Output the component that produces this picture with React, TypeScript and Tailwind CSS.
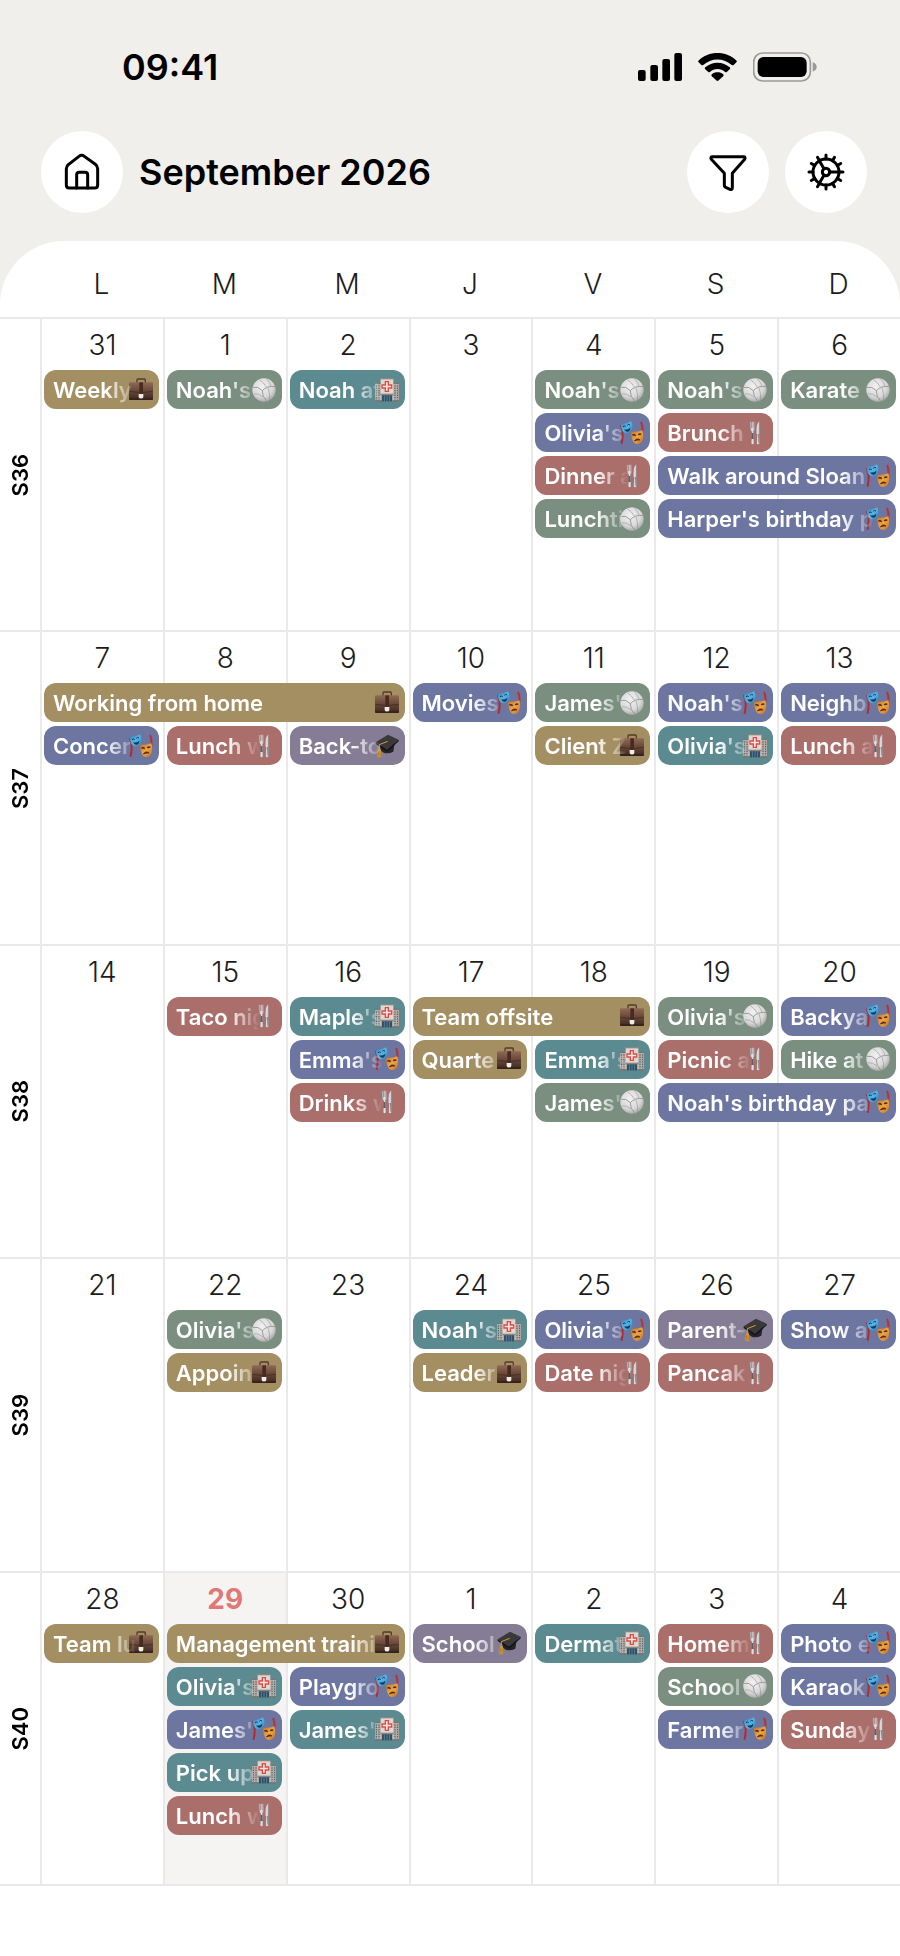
import type { ReactNode } from "react";

type Category = "work" | "sport" | "health" | "fun" | "food" | "school";

interface CalendarEvent {
  title: string;
  category: Category;
  day: number; // 0 = Monday
  lane: number;
  span?: number;
}

interface Week {
  label: string;
  days: number[];
  today?: number;
  events: CalendarEvent[];
}

const WEEKDAYS = ["L", "M", "M", "J", "V", "S", "D"];

const CATEGORY_BG: Record<Category, string> = {
  work: "bg-[#a48f63]",
  sport: "bg-[#7a8f80]",
  health: "bg-[#5c8a91]",
  fun: "bg-[#6d75a1]",
  food: "bg-[#aa6e6b]",
  school: "bg-[#857d95]",
};

const WEEKS: Week[] = [
  {
    label: "S36",
    days: [31, 1, 2, 3, 4, 5, 6],
    events: [
      { title: "Weekly", category: "work", day: 0, lane: 0 },
      { title: "Noah's", category: "sport", day: 1, lane: 0 },
      { title: "Noah at", category: "health", day: 2, lane: 0 },
      { title: "Noah's", category: "sport", day: 4, lane: 0 },
      { title: "Olivia's", category: "fun", day: 4, lane: 1 },
      { title: "Dinner a", category: "food", day: 4, lane: 2 },
      { title: "Lunchti", category: "sport", day: 4, lane: 3 },
      { title: "Noah's", category: "sport", day: 5, lane: 0 },
      { title: "Brunch", category: "food", day: 5, lane: 1 },
      { title: "Walk around Sloan", category: "fun", day: 5, lane: 2, span: 2 },
      { title: "Harper's birthday p", category: "fun", day: 5, lane: 3, span: 2 },
      { title: "Karate", category: "sport", day: 6, lane: 0 },
    ],
  },
  {
    label: "S37",
    days: [7, 8, 9, 10, 11, 12, 13],
    events: [
      { title: "Working from home", category: "work", day: 0, lane: 0, span: 3 },
      { title: "Concer", category: "fun", day: 0, lane: 1 },
      { title: "Lunch w", category: "food", day: 1, lane: 1 },
      { title: "Back-to", category: "school", day: 2, lane: 1 },
      { title: "Movies", category: "fun", day: 3, lane: 0 },
      { title: "James'", category: "sport", day: 4, lane: 0 },
      { title: "Client Z", category: "work", day: 4, lane: 1 },
      { title: "Noah's", category: "fun", day: 5, lane: 0 },
      { title: "Olivia's", category: "health", day: 5, lane: 1 },
      { title: "Neighb", category: "fun", day: 6, lane: 0 },
      { title: "Lunch a", category: "food", day: 6, lane: 1 },
    ],
  },
  {
    label: "S38",
    days: [14, 15, 16, 17, 18, 19, 20],
    events: [
      { title: "Taco nig", category: "food", day: 1, lane: 0 },
      { title: "Maple's", category: "health", day: 2, lane: 0 },
      { title: "Emma's", category: "fun", day: 2, lane: 1 },
      { title: "Drinks w", category: "food", day: 2, lane: 2 },
      { title: "Team offsite", category: "work", day: 3, lane: 0, span: 2 },
      { title: "Quarte", category: "work", day: 3, lane: 1 },
      { title: "Emma's", category: "health", day: 4, lane: 1 },
      { title: "James'", category: "sport", day: 4, lane: 2 },
      { title: "Olivia's", category: "sport", day: 5, lane: 0 },
      { title: "Picnic a", category: "food", day: 5, lane: 1 },
      { title: "Noah's birthday pa", category: "fun", day: 5, lane: 2, span: 2 },
      { title: "Backya", category: "fun", day: 6, lane: 0 },
      { title: "Hike at", category: "sport", day: 6, lane: 1 },
    ],
  },
  {
    label: "S39",
    days: [21, 22, 23, 24, 25, 26, 27],
    events: [
      { title: "Olivia's", category: "sport", day: 1, lane: 0 },
      { title: "Appoin", category: "work", day: 1, lane: 1 },
      { title: "Noah's", category: "health", day: 3, lane: 0 },
      { title: "Leader", category: "work", day: 3, lane: 1 },
      { title: "Olivia's", category: "fun", day: 4, lane: 0 },
      { title: "Date nig", category: "food", day: 4, lane: 1 },
      { title: "Parent-", category: "school", day: 5, lane: 0 },
      { title: "Pancak", category: "food", day: 5, lane: 1 },
      { title: "Show a", category: "fun", day: 6, lane: 0 },
    ],
  },
  {
    label: "S40",
    days: [28, 29, 30, 1, 2, 3, 4],
    today: 1,
    events: [
      { title: "Team lu", category: "work", day: 0, lane: 0 },
      { title: "Management traini", category: "work", day: 1, lane: 0, span: 2 },
      { title: "Olivia's", category: "health", day: 1, lane: 1 },
      { title: "James'", category: "fun", day: 1, lane: 2 },
      { title: "Pick up", category: "health", day: 1, lane: 3 },
      { title: "Lunch w", category: "food", day: 1, lane: 4 },
      { title: "Playgro", category: "fun", day: 2, lane: 1 },
      { title: "James'", category: "health", day: 2, lane: 2 },
      { title: "School", category: "school", day: 3, lane: 0 },
      { title: "Dermat", category: "health", day: 4, lane: 0 },
      { title: "Homem", category: "food", day: 5, lane: 0 },
      { title: "School", category: "sport", day: 5, lane: 1 },
      { title: "Farmer", category: "fun", day: 5, lane: 2 },
      { title: "Photo e", category: "fun", day: 6, lane: 0 },
      { title: "Karaok", category: "fun", day: 6, lane: 1 },
      { title: "Sunday", category: "food", day: 6, lane: 2 },
    ],
  },
];

// Shared gradients for the event icons
function IconDefs() {
  return (
    <svg className="absolute size-0" aria-hidden="true">
      <defs>
        <linearGradient id="leather" x1="0" y1="0" x2="0" y2="1">
          <stop offset="0" stopColor="#8f6a55" />
          <stop offset="0.45" stopColor="#6b4a3a" />
          <stop offset="1" stopColor="#3b2820" />
        </linearGradient>
        <radialGradient id="ball" cx="0.42" cy="0.35" r="0.65">
          <stop offset="0" stopColor="#f1f1f1" />
          <stop offset="0.7" stopColor="#d8d8d8" />
          <stop offset="1" stopColor="#adadad" />
        </radialGradient>
        <linearGradient id="maskBlue" x1="0" y1="0" x2="1" y2="1">
          <stop offset="0" stopColor="#2f7fb8" />
          <stop offset="0.5" stopColor="#55b4e6" />
          <stop offset="1" stopColor="#2b82bd" />
        </linearGradient>
        <linearGradient id="maskOrange" x1="0" y1="0" x2="1" y2="1">
          <stop offset="0" stopColor="#b9702c" />
          <stop offset="0.5" stopColor="#efa544" />
          <stop offset="1" stopColor="#c06f25" />
        </linearGradient>
        <linearGradient id="steel" x1="0" y1="0" x2="1" y2="0">
          <stop offset="0" stopColor="#8d959b" />
          <stop offset="0.5" stopColor="#e3e8ea" />
          <stop offset="1" stopColor="#a5adb2" />
        </linearGradient>
      </defs>
    </svg>
  );
}

const ICONS: Record<Category, ReactNode> = {
  work: (
    <>
      <path d="M24 15V6q0-3 3-3h19q3 0 3 3v9" fill="none" stroke="#55392c" strokeWidth="4" />
      <rect x="0" y="13" width="72" height="53" rx="4" fill="url(#leather)" />
      <path d="M1 40q35 8 70 0" fill="none" stroke="#3a251d" strokeWidth="2" />
      <path d="M31 13h11v34H31z" fill="#482a20" />
      <path d="M29 48h14v9q-1 6-7 6t-7-6z" fill="#f0ece6" />
      <path d="M0 63h72" stroke="#2d1c16" strokeWidth="3" />
    </>
  ),
  sport: (
    <>
      <circle cx="36" cy="36" r="35" fill="url(#ball)" />
      <g fill="none" stroke="#8c8c8c" strokeWidth="2.4">
        <path d="M31 38Q18 24 3 28M31 38Q46 22 69 26M31 38Q30 56 44 69" />
        <path d="M22 5Q36 14 43 27M44 3Q53 12 57 24" strokeWidth="1.6" />
        <path d="M6 47Q20 46 33 57M48 30Q54 44 53 66" strokeWidth="1.6" />
      </g>
    </>
  ),
  health: (
    <>
      <path d="M0 17h72v50H0z" fill="#b3ada7" />
      <path d="M0 14h20v4H0zM52 14h20v4H52z" fill="#7c7671" />
      <path d="M4 22v43M12 22v43M60 22v43M68 22v43" stroke="#4c5358" strokeWidth="3" strokeDasharray="4 3" />
      <path d="M17 2h38v66H17z" fill="#ddd8d3" />
      <path d="M15 0h42v4H15z" fill="#8c8681" />
      <path
        d="M31 11h9v10h10v9H40v10h-9V30H21v-9h10z"
        fill="#f4e6e2"
        stroke="#e04a45"
        strokeWidth="4"
      />
      <path d="M20 51h32v19H20z" fill="#2f4d63" />
      <path d="M28 53v17M36 53v17M44 53v17" stroke="#6e9cb8" strokeWidth="2" />
      <path d="M16 47h40v5H16z" fill="#8c8681" />
      <path d="M0 67h20v4H0zM52 67h20v4H52z" fill="#79736d" />
    </>
  ),
  fun: (
    <>
      <path d="M3 14Q12 35 5 66" fill="none" stroke="#b22c2e" strokeWidth="6" strokeLinecap="round" />
      <path d="M64 5Q71 24 64 46" fill="none" stroke="#b93232" strokeWidth="6" strokeLinecap="round" />
      <path d="M2 10Q18 9 33 1q8 15 1 28-7 10-18 8Q3 31 2 10z" fill="url(#maskBlue)" />
      <path d="M9 17q4-4 8 0M22 13q4-5 8-1" fill="none" stroke="#12344e" strokeWidth="3" />
      <path d="M12 25q11 3 19-5-1 12-9 12-7 0-10-7z" fill="#153a55" />
      <path d="M33 32q16 2 34-4 6 20-2 34-6 9-16 7-14-4-16-37z" fill="url(#maskOrange)" />
      <path d="M37 43q5-4 10 1M55 42q4-5 9-2" fill="none" stroke="#50270e" strokeWidth="4" />
      <path d="M43 60q7-11 17-3-8-1-17 3z" fill="#4f230b" stroke="#4f230b" strokeWidth="2" />
    </>
  ),
  food: (
    <>
      <path
        d="M20 3l2 21q0 6 5 8l-2 33q0 5 4 5t4-5l-2-34q4-2 4-8L34 2h-3v19h-2V2h-3v19h-2V3z"
        fill="url(#steel)"
      />
      <path d="M26 36h5l1 18h-7z" fill="#59616a" />
      <path d="M49 1q-11 9-10 38h4l-2 27q0 4 4 4t5-4l-1-28z" fill="url(#steel)" />
      <path d="M47 39l1 26" stroke="#747d84" strokeWidth="3" />
    </>
  ),
  school: (
    <>
      <path d="M17 28l-1 19q13 18 39 6l4-25z" fill="#242426" />
      <path d="M2 25L39 2l32 15-35 31z" fill="#39393b" />
      <path d="M36 48l35-31v5L37 53 2 30v-5z" fill="#151517" />
      <path d="M38 22L13 32v16" fill="none" stroke="#d9982d" strokeWidth="3" />
      <path d="M10 45h7l2 23q-7 4-13-1z" fill="#d9982d" />
      <path d="M11 52l-1 15M15 52v16" stroke="#9b661a" strokeWidth="1.5" />
    </>
  ),
};

function StatusBar() {
  return (
    <div className="flex items-center justify-between pt-[46px] pr-[83px] pl-[122px]">
      <time className="text-[36px] leading-[42px] font-semibold">09:41</time>
      <div className="flex items-center gap-4">
        <svg className="h-7 w-11" viewBox="0 0 132 84" aria-hidden="true">
          <rect x="0" y="51" width="23" height="33" rx="6" />
          <rect x="37" y="36" width="23" height="48" rx="6" />
          <rect x="73" y="18" width="23" height="66" rx="6" />
          <rect x="109" y="0" width="23" height="84" rx="6" />
        </svg>
        <svg className="h-7 w-[39px]" viewBox="0 0 118 84" aria-hidden="true">
          <path d="M59 0C81 0 101 8 116 22q3 3 0 6l-8 8q-3 2-6 0C90 25 75 19 59 19S28 25 16 36q-3 2-6 0l-8-8q-3-3 0-6C17 8 37 0 59 0z" />
          <path d="M59 29c14 0 27 5 37 14 2 2 2 4 0 6l-9 8q-2 2-5 0c-6-6-14-9-23-9s-17 3-23 9q-3 2-5 0l-9-8c-2-2-2-4 0-6 10-9 23-14 37-14z" />
          <path d="M59 58c7 0 12 2 17 6 2 2 2 4 0 6L62 83q-3 2-6 0L42 70c-2-2-2-4 0-6 5-4 10-6 17-6z" />
        </svg>
        <svg className="h-[30px] w-16" viewBox="0 0 192 90" aria-hidden="true">
          <rect x="2" y="3" width="170" height="84" rx="27" fill="none" stroke="#9b9a98" strokeWidth="5" />
          <rect x="14" y="15" width="147" height="60" rx="17" />
          <path d="M179 31q12 4 12 14t-12 14z" fill="#9b9a98" />
        </svg>
      </div>
    </div>
  );
}

function IconButton({ label, children }: { label: string; children: ReactNode }) {
  return (
    <button
      type="button"
      aria-label={label}
      className="flex size-[82px] shrink-0 items-center justify-center rounded-full bg-white"
    >
      <svg
        className="size-9 overflow-visible"
        viewBox="0 0 108 108"
        fill="none"
        stroke="black"
        strokeWidth="9"
        strokeLinecap="round"
        strokeLinejoin="round"
      >
        {children}
      </svg>
    </button>
  );
}

const GEAR_TEETH = Array.from({ length: 12 }, (_, i) => i * 30);

function Header() {
  return (
    <div className="flex items-center gap-4 pt-[43px] pr-[33px] pb-7 pl-[41px]">
      <IconButton label="Home">
        <path d="M7 44Q7 36 14 31L45 7q8-6 16 0l33 24q7 5 7 13v49q0 9-9 9H16q-9 0-9-9z" />
        <path d="M38 102V63q0-8 8-8h17q8 0 8 8v39" />
      </IconButton>
      <h1 className="flex-1 text-[36px] leading-[42px] font-semibold whitespace-nowrap">
        September 2026
      </h1>
      <IconButton label="Filter">
        <path d="M8 8h92q8 0 4 8L67 58v43q0 7-7 5l-11-5q-6-2-6-8V58L4 16q-4-8 4-8z" />
      </IconButton>
      <IconButton label="Settings">
        <circle cx="54" cy="54" r="39" />
        <circle cx="54" cy="54" r="11" />
        <path d="M65 54h28M48 44L34 20M48 64L34 88" />
        {GEAR_TEETH.map((angle) => (
          <path key={angle} d="M93 54h12" transform={`rotate(${angle} 54 54)`} />
        ))}
      </IconButton>
    </div>
  );
}

function EventPill({ event }: { event: CalendarEvent }) {
  return (
    <div
      className="min-w-0 px-1"
      style={{
        gridColumn: `${event.day + 2} / span ${event.span ?? 1}`,
        gridRow: event.lane + 2,
      }}
    >
      <button
        type="button"
        className={`flex h-[39px] w-full items-center rounded-xl pr-[6px] pl-[9px] text-left text-white ${CATEGORY_BG[event.category]}`}
      >
        <span className="min-w-0 flex-1 overflow-hidden pt-px text-[22px] leading-[30px] font-semibold whitespace-nowrap [mask-image:linear-gradient(to_right,black_calc(100%-32px),transparent)]">
          {event.title}
        </span>
        <svg className="-ml-2 size-6 shrink-0" viewBox="0 0 72 72" aria-hidden="true">
          {ICONS[event.category]}
        </svg>
      </button>
    </div>
  );
}

function WeekRow({ week }: { week: Week }) {
  return (
    <section className="grid grid-cols-[40px_repeat(7,minmax(0,1fr))] grid-rows-[51px_repeat(5,43px)_1fr] border-t-2 border-[#e9e9e9]">
      <div className="col-start-1 row-span-full flex items-center justify-center">
        <span className="rotate-180 text-[22px] leading-6 font-semibold [writing-mode:vertical-rl]">
          {week.label}
        </span>
      </div>
      {week.days.map((date, i) => {
        const isToday = week.today === i;
        return (
          <div
            key={date}
            className={`row-span-full border-l-2 border-[#e9e9e9] pt-[9px] text-center text-[28px] leading-[34px] ${
              isToday ? "bg-[#f5f4f2] font-bold text-[#e07875]" : "font-[350] text-[#1c1c1c]"
            }`}
            style={{ gridColumn: i + 2 }}
          >
            {date}
          </div>
        );
      })}
      {week.events.map((event) => (
        <EventPill key={`${event.day}-${event.lane}`} event={event} />
      ))}
    </section>
  );
}

export default function App() {
  return (
    <div className="flex min-h-screen flex-col bg-[#f0efeb] font-['Inter',sans-serif] text-black">
      <IconDefs />
      <header>
        <StatusBar />
        <Header />
      </header>
      <main className="flex flex-1 flex-col rounded-t-[64px] bg-white pb-[70px]">
        <div className="grid h-[76px] grid-cols-[40px_repeat(7,minmax(0,1fr))] items-center pt-[10px] text-center text-[28px] leading-[34px] font-[350] text-[#1c1c1c]">
          <span />
          {WEEKDAYS.map((name, i) => (
            <span key={i}>{name}</span>
          ))}
        </div>
        <div className="grid flex-1 auto-rows-fr border-b-2 border-[#e9e9e9]">
          {WEEKS.map((week) => (
            <WeekRow key={week.label} week={week} />
          ))}
        </div>
      </main>
    </div>
  );
}
